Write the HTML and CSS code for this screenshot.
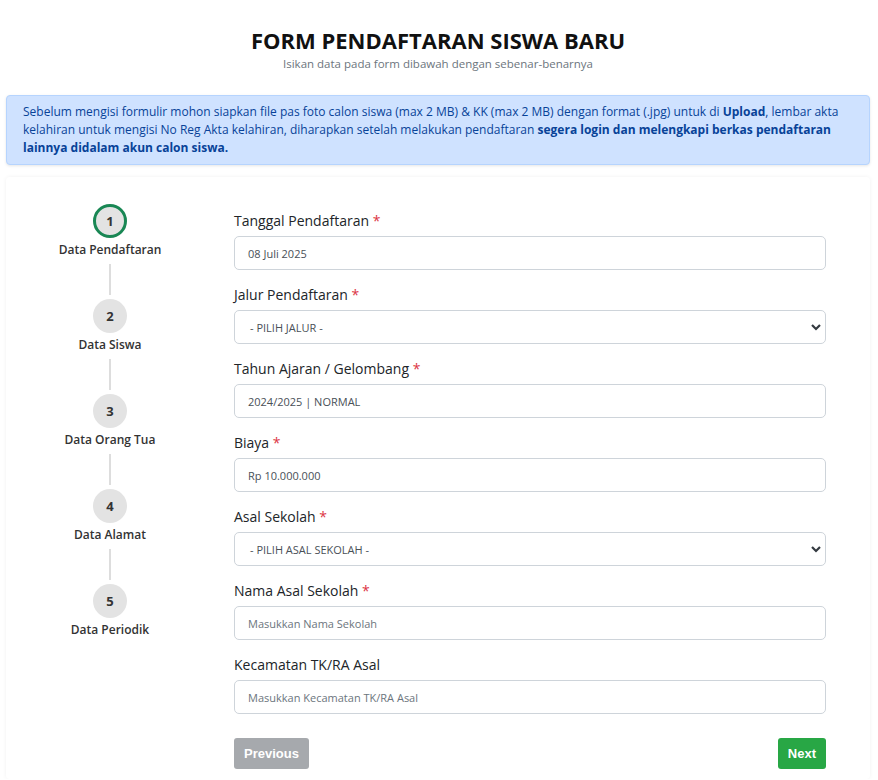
FILE: index.html
```html
<!DOCTYPE html>
<html lang="id">
<head>
<meta charset="utf-8">
<title>Form Pendaftaran</title>
<link rel="stylesheet" href="styles.css">
</head>
<body>
<div class="page">
  <header class="head">
    <h1>FORM PENDAFTARAN SISWA BARU</h1>
    <p>Isikan data pada form dibawah dengan sebenar-benarnya</p>
  </header>
  <div class="alert">Sebelum mengisi formulir mohon siapkan file pas foto calon siswa (max 2 MB) &amp; KK (max 2 MB) dengan format (.jpg) untuk di <b>Upload</b>, lembar akta kelahiran untuk mengisi No Reg Akta kelahiran, diharapkan setelah melakukan pendaftaran <b>segera login dan melengkapi berkas pendaftaran lainnya didalam akun calon siswa.</b></div>
  <div class="card">
    <ol class="steps">
      <li class="step active"><span class="num">1</span><span class="lbl">Data Pendaftaran</span></li>
      <li class="line"></li>
      <li class="step"><span class="num">2</span><span class="lbl">Data Siswa</span></li>
      <li class="line"></li>
      <li class="step"><span class="num">3</span><span class="lbl">Data Orang Tua</span></li>
      <li class="line"></li>
      <li class="step"><span class="num">4</span><span class="lbl">Data Alamat</span></li>
      <li class="line"></li>
      <li class="step"><span class="num">5</span><span class="lbl">Data Periodik</span></li>
    </ol>
    <form class="form">
      <div class="field"><label>Tanggal Pendaftaran <span class="req">*</span></label><div class="input">08 Juli 2025</div></div>
      <div class="field"><label>Jalur Pendaftaran <span class="req">*</span></label><div class="input select"><span>- PILIH JALUR -</span><svg width="12" height="10" viewBox="0 0 12 10"><path d="M2 3l4 4 4-4" fill="none" stroke="#343a40" stroke-width="2.2"/></svg></div></div>
      <div class="field"><label>Tahun Ajaran / Gelombang <span class="req">*</span></label><div class="input">2024/2025 | NORMAL</div></div>
      <div class="field"><label>Biaya <span class="req">*</span></label><div class="input">Rp 10.000.000</div></div>
      <div class="field"><label>Asal Sekolah <span class="req">*</span></label><div class="input select"><span>- PILIH ASAL SEKOLAH -</span><svg width="12" height="10" viewBox="0 0 12 10"><path d="M2 3l4 4 4-4" fill="none" stroke="#343a40" stroke-width="2.2"/></svg></div></div>
      <div class="field"><label>Nama Asal Sekolah <span class="req">*</span></label><div class="input ph">Masukkan Nama Sekolah</div></div>
      <div class="field"><label>Kecamatan TK/RA Asal</label><div class="input ph">Masukkan Kecamatan TK/RA Asal</div></div>
      <div class="actions"><button type="button" class="btn prev">Previous</button><button type="button" class="btn next">Next</button></div>
    </form>
  </div>
</div>
</body>
</html>
```
FILE: styles.css
```css
* { box-sizing: border-box; }
body { margin: 0; background: #fff; font-family: "Open Sans", "DejaVu Sans", sans-serif; color: #212529; }
.page { padding: 0 8px 0 6px; }
.head { text-align: center; padding-top: 27px; }
.head h1 { margin: 0; font-size: 22px; font-weight: 700; color: #111; letter-spacing: 0; line-height: 26px; }
.head p { margin: 3px 0 0; font-size: 11.5px; color: #6c757d; line-height: 16px; }
.alert { margin-top: 23px; background: #cfe2ff; border: 1px solid #b6d4fe; border-radius: 4px; padding: 7px 16px 7px; font-size: 12px; line-height: 18px; color: #084298; box-shadow: 0 1px 3px rgba(0,0,0,.1); }
.alert b { font-weight: 700; }
.card { margin-top: 12px; display: flex; box-shadow: 0 0 4px rgba(0,0,0,.06); border-radius: 4px; padding: 27px 44px 10px 44px; }
.steps { list-style: none; margin: 0; padding: 0; width: 120px; display: flex; flex-direction: column; align-items: center; }
.step { display: flex; flex-direction: column; align-items: center; }
.num { width: 34px; height: 34px; border-radius: 50%; background: #e3e3e3; display: flex; align-items: center; justify-content: center; font-size: 13px; font-weight: 700; color: #333; }
.step.active .num { border: 3px solid #198754; }
.lbl { margin-top: 4px; font-size: 12px; font-weight: 600; color: #333; line-height: 16px; }
.line { width: 2px; height: 31px; background: #ddd; margin: 6px 0 4px; }
.form { flex: 1; margin-left: 64px; padding-top: 8px; }
.field { margin-bottom: 16px; }
.field label { display: block; font-size: 14px; color: #212529; line-height: 18px; margin-bottom: 6px; }
.req { color: #dc3545; }
.input { height: 34px; border: 1px solid #ced4da; border-radius: 5px; padding: 0 13px; display: flex; align-items: center; font-size: 11px; color: #495057; }
.input.ph { color: #6c757d; }
.select { justify-content: space-between; padding-left: 15px; padding-right: 3px; }
.actions { display: flex; justify-content: space-between; margin-top: 24px; }
.btn { font-family: "Liberation Sans", Arial, sans-serif; font-weight: 700; font-size: 13px; color: #fff; border: 0; border-radius: 3px; height: 31px; padding: 0 10px; }
.prev { background: #a6a9ad; }
.next { background: #28a745; }
```
